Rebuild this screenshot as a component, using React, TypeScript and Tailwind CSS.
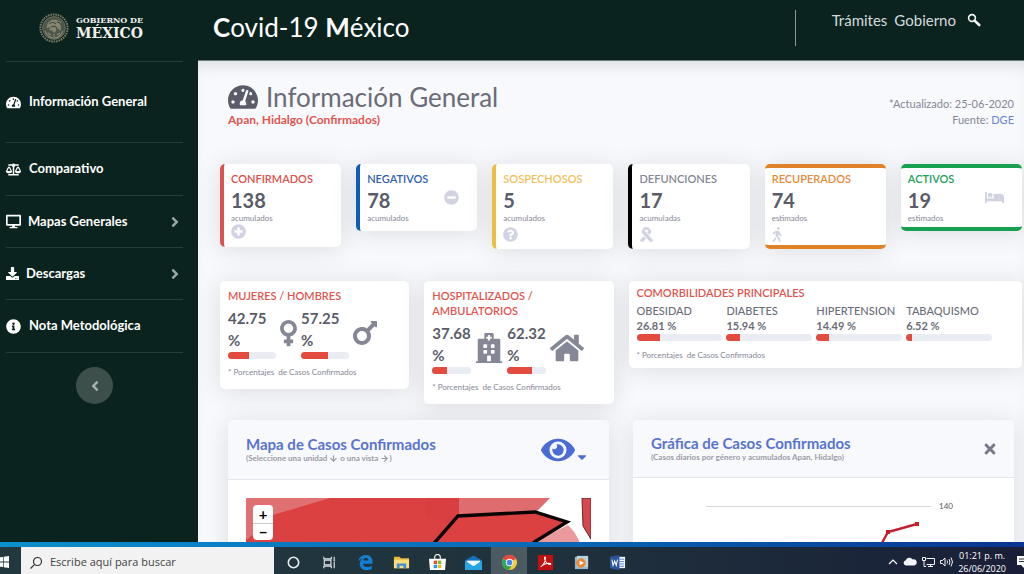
import type { ReactNode } from 'react';
import type { IconType } from 'react-icons';
import { ArrowDown, ArrowRight } from 'lucide-react';
import {
  FaAngleLeft,
  FaAngleRight,
  FaBalanceScale,
  FaBed,
  FaCaretDown,
  FaDesktop,
  FaDownload,
  FaEye,
  FaHome,
  FaHospital,
  FaInfoCircle,
  FaMars,
  FaMinusCircle,
  FaPlusCircle,
  FaQuestionCircle,
  FaRibbon,
  FaTachometerAlt,
  FaTimes,
  FaVenus,
  FaWalking,
} from 'react-icons/fa';

const cardShadow = 'shadow-[0_2px_24px_rgba(58,59,69,0.15)]';

const menu: { label: string; icon: IconType; arrow?: boolean; height: string; gap: string }[] = [
  { label: 'Información General', icon: FaTachometerAlt, height: 'h-[81px]', gap: 'gap-2' },
  { label: 'Comparativo', icon: FaBalanceScale, height: 'h-[53px]', gap: 'gap-2' },
  { label: 'Mapas Generales', icon: FaDesktop, arrow: true, height: 'h-[52px]', gap: 'gap-[7px]' },
  { label: 'Descargas', icon: FaDownload, arrow: true, height: 'h-[52px]', gap: 'gap-[7px]' },
  { label: 'Nota Metodológica', icon: FaInfoCircle, height: 'h-[53px]', gap: 'gap-2' },
];

const stats: {
  label: string;
  value: number;
  note: string;
  icon: IconType;
  side?: boolean;
  border: string;
  text: string;
  iconBox: string;
}[] = [
  { label: 'CONFIRMADOS', value: 138, note: 'acumulados', icon: FaPlusCircle, border: 'border-l-4 border-[#d9534f] pt-[7px] pb-2', text: 'text-[#e04f4a]', iconBox: 'h-4' },
  { label: 'NEGATIVOS', value: 78, note: 'acumulados', icon: FaMinusCircle, side: true, border: 'border-l-4 border-[#0f5db5] pt-[7px] pb-2', text: 'text-[#2f62b0]', iconBox: '' },
  { label: 'SOSPECHOSOS', value: 5, note: 'acumulados', icon: FaQuestionCircle, border: 'border-l-4 border-[#edbd45] pt-[7px] pb-[7px]', text: 'text-[#f0c25c]', iconBox: 'h-[19px]' },
  { label: 'DEFUNCIONES', value: 17, note: 'acumuladas', icon: FaRibbon, border: 'border-l-4 border-black pt-[7px] pb-[7px]', text: 'text-[#858796]', iconBox: 'h-[19px]' },
  { label: 'RECUPERADOS', value: 74, note: 'estimados', icon: FaWalking, border: 'border-y-4 border-[#e08228] pt-[3px] pb-[3px]', text: 'text-[#e58a3c]', iconBox: 'h-[19px]' },
  { label: 'ACTIVOS', value: 19, note: 'estimados', icon: FaBed, side: true, border: 'border-y-4 border-[#17a04f] pt-[3px] pb-1', text: 'text-[#24a058]', iconBox: '' },
];

const comorbidities = [
  { label: 'OBESIDAD', value: 26.81 },
  { label: 'DIABETES', value: 15.94 },
  { label: 'HIPERTENSION', value: 14.49 },
  { label: 'TABAQUISMO', value: 6.52 },
];

function Seal() {
  return (
    <svg viewBox="0 0 30 30" className="size-[30px]" fill="none" aria-hidden="true">
      <circle cx="15" cy="15" r="13.6" stroke="#7b7c68" strokeWidth="2" strokeDasharray="1.6 0.9" />
      <circle cx="15" cy="15" r="11.4" fill="#4c5549" stroke="#77796a" strokeWidth="0.8" />
      <path d="M8 12c1-4 5-6 9-5 3 .6 4 2 6 2-1 1-2 1-3 1 2 2 3 5 1 8-1-2-2-3-4-3 1 2 0 4-2 5-1-2-3-3-5-3 1-1 1-2 0-3-1 1-2 1-3 1 1-1 1-2 1-3z" fill="#84846f" />
      <path d="M10 11c2-2 5-2 7 0M12 14c2-1 4-1 6 1M18 9l3 1" stroke="#2c3a33" strokeWidth="0.9" />
      <path d="M6 18c2 5 6 7 9 7s7-2 9-7M9 20l3 2M15 21v3M21 20l-3 2" stroke="#8a8a74" strokeWidth="1.1" />
    </svg>
  );
}

function Card({ className = '', children }: { className?: string; children: ReactNode }) {
  return <section className={`rounded-[5px] bg-white ${cardShadow} ${className}`}>{children}</section>;
}

function Bar({ value, label }: { value: number; label: string }) {
  return (
    <div role="progressbar" aria-label={label} aria-valuenow={value} className="h-[7px] overflow-hidden rounded-full bg-[#eaecf4]">
      <div className="h-full bg-[#e34b3f]" style={{ width: `${value}%` }} />
    </div>
  );
}

function Footnote() {
  return <p className="whitespace-pre text-[8px] leading-3 text-[#858796]">* Porcentajes  de Casos Confirmados</p>;
}

function Share({ value, label, width }: { value: string; label: string; width: string }) {
  return (
    <div className={width}>
      <p className="text-[15px] leading-[22px] font-bold text-[#5a5c69]">
        {value}
        <br />%
      </p>
      <div className="pt-px">
        <Bar value={Number(value)} label={label} />
      </div>
    </div>
  );
}

function Sidebar() {
  return (
    <aside className="flex w-[198px] shrink-0 flex-col bg-[#0b231e] pr-[15px] pl-1.5 text-white">
      <a href="#inicio" className="flex h-[61px] items-center gap-[7px] pb-1.5 pl-[33px]">
        <Seal />
        <span className="flex flex-col font-['DejaVu_Serif','Liberation_Serif',serif] font-bold text-[#f1f1ee]">
          <span className="text-[8px] leading-[10px]">GOBIERNO DE</span>
          <span className="text-[14px] leading-4">MÉXICO</span>
        </span>
      </a>
      <nav className="border-b border-[#24403a]">
        {menu.map(({ label, icon: Icon, arrow, height, gap }) => (
          <a key={label} href="#menu" className={`flex items-center border-t border-[#24403a] text-[13px] font-bold ${height} ${gap}`}>
            <Icon className={label === 'Descargas' ? 'size-[13px]' : 'size-[15px]'} />
            <span className="flex-1">{label}</span>
            {arrow && <FaAngleRight className="size-4 text-[#9aa7a3]" />}
          </a>
        ))}
      </nav>
      <button type="button" aria-label="Contraer menú" className="mt-3.5 flex size-[37px] items-center justify-center self-center rounded-full bg-[#3c4f4b]">
        <FaAngleLeft className="size-4 text-[#a5afac]" />
      </button>
    </aside>
  );
}

function Header() {
  return (
    <header className="flex h-[61px] shrink-0 items-start border-b border-[#6d7b79] bg-[#0b231e] pr-[43px] pl-[15px] text-white">
      <h1 className="flex-1 pt-2.5 text-[26px] leading-[34px]">
        <b>C</b>ovid-19 <b>M</b>éxico
      </h1>
      <div className="mt-2.5 h-9 w-px bg-[#8b9794]" />
      <nav className="flex items-center gap-[7px] pt-2.5 pl-9 text-[15px] leading-5 text-[#d5dade]">
        <a href="#tramites">Trámites</a>
        <a href="#gobierno">Gobierno</a>
        <button type="button" aria-label="Buscar" className="pl-1">
          <svg viewBox="0 0 14 14" className="size-[14px]" fill="none" stroke="#f4f6f6">
            <circle cx="5" cy="5" r="3.4" strokeWidth="1.6" />
            <path d="M7.6 7.6l4.6 4.4" strokeWidth="2.6" strokeLinecap="round" />
          </svg>
        </button>
      </nav>
    </header>
  );
}

function MapPanel() {
  return (
    <Card className="overflow-hidden">
      <div className="flex h-[60px] items-center justify-between border-b border-[#e3e6f0] bg-[#f8f9fc] pr-5 pl-[18px]">
        <div className="pb-px">
          <h3 className="text-[15px] leading-[18px] font-bold text-[#5873cf]">Mapa de Casos Confirmados</h3>
          <p className="text-[8px] leading-[10px] font-bold text-[#9a9ba6]">
            (Seleccione una unidad <ArrowDown className="inline size-[9px]" strokeWidth={3} /> o una vista{' '}
            <ArrowRight className="inline size-[9px]" strokeWidth={3} />)
          </p>
        </div>
        <button type="button" aria-label="Elegir vista" className="flex items-center text-[#4a6cd4]">
          <FaEye className="size-[34px]" />
          <FaCaretDown className="mt-3.5 size-3.5" />
        </button>
      </div>
      <div className="px-[18px] pt-[18px]">
        <div className="relative">
          <svg viewBox="0 0 345 90" className="block w-full" role="img" aria-label="Mapa">
            <path d="M0 0H345V90H0z" fill="#db4141" />
            <path d="M0 0H84L27 17L8 36L0 42z" fill="#e07173" />
            <path d="M213 0H304L290 14L213 17z" fill="#df6c6f" />
            <path d="M180 0h33v17l-9 9-24-7z" fill="#d83f41" />
            <path d="M304 0H336L337 28L345 42V90H290V43L321 24L290 14z" fill="#fff" />
            <path d="M322 27Q330 35 333 43L350 90H270L290 43z" fill="#ea9a9c" />
            <path d="M336 0H345V41L337 28z" fill="#d8474b" stroke="#5d3134" />
            <path d="M160 80L190 43L212 18L289 14L321 24L290 43L240 80" fill="none" stroke="#080404" strokeWidth="3.4" />
          </svg>
          <div className="absolute top-[7px] left-[7px] flex w-5 flex-col rounded-sm bg-white text-[15px] leading-4 font-bold text-black">
            <button type="button" className="h-[19px] border-b border-[#ccc]">+</button>
            <button type="button" className="h-4">−</button>
          </div>
        </div>
      </div>
    </Card>
  );
}

function ChartPanel() {
  return (
    <Card className="overflow-hidden">
      <div className="flex h-[58px] items-center justify-between border-b border-[#e3e6f0] bg-[#f8f9fc] pr-4 pl-[18px]">
        <div className="pb-px">
          <h3 className="text-[15px] leading-[18px] font-bold text-[#5873cf]">Gráfica de Casos Confirmados</h3>
          <p className="text-[8px] leading-[10px] font-bold text-[#9a9ba6]">(Casos diarios por género y acumulados Apan, Hidalgo)</p>
        </div>
        <button type="button" aria-label="Cerrar" className="text-[#77798a]">
          <FaTimes className="size-4" />
        </button>
      </div>
      <svg viewBox="0 0 381 90" className="block w-full" role="img" aria-label="Casos acumulados">
        <path d="M73 28.5H298" stroke="#d5d5da" />
        <text x="306" y="31" fontSize="8" fill="#555">140</text>
        <path d="M244 74L255 54L284 46" fill="none" stroke="#c2202a" strokeWidth="2.4" />
        <path d="M253 52h4v4h-4zM282 44h4v4h-4z" fill="#c2202a" />
      </svg>
    </Card>
  );
}

function Dashboard() {
  return (
    <main className="flex-1 bg-[#f8f9fc] pr-0.5 pl-[22px] shadow-[inset_0_12px_16px_-8px_rgba(58,59,69,0.15)]">
      <div className="flex items-start justify-between pt-5 pr-2 pl-2">
        <div>
          <h2 className="flex items-center gap-2 text-[26px] leading-8 text-[#6a6c78]">
            <FaTachometerAlt className="size-[30px] text-[#5a5c69]" />
            Información General
          </h2>
          <p className="pt-px text-[12px] leading-3 font-bold text-[#e0564f]">Apan, Hidalgo (Confirmados)</p>
        </div>
        <p className="pt-[15px] text-right text-[11px] leading-4 text-[#858796]">
          *Actualizado: 25-06-2020
          <br />
          Fuente: <a href="#dge" className="text-[#6b86cf]">DGE</a>
        </p>
      </div>

      <div className="mt-9 grid h-[86px] grid-cols-6 items-start gap-[15px]">
        {stats.map(({ label, value, note, icon: Icon, side, border, text, iconBox }) => (
          <Card key={label} className={border}>
            <div className="flex items-center justify-between pr-[18px] pl-[7px]">
              <div>
                <h3 className={`text-[11px] leading-4 font-semibold ${text}`}>{label}</h3>
                <p className="text-[20px] leading-[27px] font-bold text-[#5a5c69]">{value}</p>
                <p className="text-[8px] leading-[9px] text-[#858796]">{note}</p>
                {!side && (
                  <div className={`flex items-end ${iconBox}`}>
                    <Icon className={`text-[#d1d3e2] ${label === 'RECUPERADOS' ? 'h-[15px] w-2.5' : 'size-[15px]'}`} />
                  </div>
                )}
              </div>
              {side && <Icon className={`text-[#d1d3e2] ${label === 'ACTIVOS' ? 'size-[19px]' : 'size-[15px]'}`} />}
            </div>
          </Card>
        ))}
      </div>

      <div className="mt-[31px] grid grid-cols-4 items-start gap-[15px]">
        <Card className="px-2 pt-[7px] pb-[11px]">
          <h3 className="text-[11px] leading-[15px] font-semibold text-[#e0564f]">MUJERES / HOMBRES</h3>
          <div className="flex items-center gap-1 pt-1 pb-[7px] text-[#858796]">
            <Share value="42.75" label="Mujeres" width="w-12" />
            <FaVenus className="h-[30px] w-[17px] shrink-0" />
            <Share value="57.25" label="Hombres" width="w-12" />
            <FaMars className="h-8 w-6 shrink-0" />
          </div>
          <Footnote />
        </Card>
        <Card className="px-2 pt-[7px] pb-[11px]">
          <h3 className="text-[11px] leading-[15px] font-semibold text-[#e0564f]">
            HOSPITALIZADOS /
            <br />
            AMBULATORIOS
          </h3>
          <div className="flex items-center gap-1 pt-1 pb-[7px] text-[#858796]">
            <Share value="37.68" label="Hospitalizados" width="w-[39px]" />
            <FaHospital className="h-[30px] w-[28px] shrink-0" />
            <Share value="62.32" label="Ambulatorios" width="w-[39px]" />
            <FaHome className="size-[34px] shrink-0" />
          </div>
          <Footnote />
        </Card>
        <Card className="col-span-2 px-2 pt-1 pb-[7px]">
          <h3 className="text-[11px] leading-[15px] font-semibold text-[#e0564f]">COMORBILIDADES PRINCIPALES</h3>
          <div className="grid grid-cols-4 gap-1 pt-[3px] pr-[22px] pb-2">
            {comorbidities.map(({ label, value }) => (
              <div key={label} className="text-[11px] font-bold text-[#6b6d79]">
                <p className="leading-[15px] font-medium">{label}</p>
                <p className="leading-4">{value} %</p>
                <Bar value={value} label={label} />
              </div>
            ))}
          </div>
          <Footnote />
        </Card>
      </div>

      <div className="mt-4 grid grid-cols-2 items-start gap-6 px-2">
        <MapPanel />
        <ChartPanel />
      </div>
    </main>
  );
}

const apps: { name: string; art: ReactNode }[] = [
  { name: 'Cortana', art: <circle cx="9" cy="9" r="5.5" fill="none" stroke="#e8ecee" strokeWidth="1.7" /> },
  {
    name: 'Vista de tareas',
    art: <path d="M3 3v2h8V3M3 15v-2h8v2M3.500 6.500h7v5h-7zM14 3v2.500M14 8v7M13 6.500h2" fill="none" stroke="#dfe5e7" strokeWidth="1.2" />,
  },
  {
    name: 'Edge',
    art: <path d="M1.500 8C2 3.500 5.500 1 9.300 1c4.500 0 7.200 3 7.200 7.300v1.900H6.300c.2 2.500 2.200 3.600 4.600 3.600 1.800 0 3.400-.5 4.700-1.300v3.400c-1.500.8-3.300 1.200-5.200 1.200-4.600 0-7.500-2.600-7.500-6.800 0-2.500 1.200-4.600 3.300-5.900C4 5 2.500 6.200 1.500 8zm5-1h5.500c0-1.800-.9-2.900-2.600-2.900S6.700 5.300 6.500 7z" fill="#1380d8" />,
  },
  {
    name: 'Explorador',
    art: (
      <>
        <path d="M1 3h6l1.500 1.500H17V15H1z" fill="#e9b63c" />
        <path d="M1 6h16v9H1z" fill="#fbdc7c" />
        <path d="M4 15v-5h10v5h-3v-2.500H7V15z" fill="#3f8fd2" />
      </>
    ),
  },
  {
    name: 'Microsoft Store',
    art: (
      <>
        <path d="M6 5V3.500a3 3 0 016 0V5" fill="none" stroke="#fff" strokeWidth="1.2" />
        <path d="M0 5h18l-1 12H1z" fill="#fff" />
        <path d="M5 7h3.600v3.600H5z" fill="#e8502a" />
        <path d="M9.400 7H13v3.600H9.400z" fill="#7fba2a" />
        <path d="M5 11.400h3.600V15H5z" fill="#1b9de2" />
        <path d="M9.400 11.400H13V15H9.400z" fill="#f7b91a" />
      </>
    ),
  },
  {
    name: 'Correo',
    art: (
      <>
        <path d="M0 7l9-5.500L18 7v10H0z" fill="#1272bd" />
        <path d="M2 7h14v6H2z" fill="#f4fafd" />
        <path d="M0 7l9 6 9-6v10H0z" fill="#29a5e6" />
      </>
    ),
  },
  {
    name: 'Chrome',
    art: (
      <>
        <circle cx="9" cy="9" r="8" fill="#f8ca3a" />
        <path d="M9 9L2 5a8 8 0 0114 0z" fill="#e14a3d" />
        <path d="M2 5a8 8 0 006.500 12L12 11 9 9z" fill="#35a455" />
        <circle cx="9" cy="9" r="3.900" fill="#fff" />
        <circle cx="9" cy="9" r="3" fill="#4385f0" />
      </>
    ),
  },
  {
    name: 'Acrobat',
    art: (
      <>
        <path d="M1 1h16v16H1z" fill="#c1100f" />
        <path d="M4 13.500c2-1 5-5 5-9.500 0-1.500-1.500-1-1 1 .6 3 3 6 6 6 1.500-.4 0-1.500-2.500-1.200C9 10 6 11.500 4 13.500z" fill="none" stroke="#fff" strokeWidth="1.100" />
      </>
    ),
  },
  {
    name: 'Reproductor',
    art: (
      <>
        <path d="M2 3h14v13H2z" fill="#8fb6cf" />
        <path d="M4 2h12v12H4z" fill="#b9d2df" />
        <circle cx="8.500" cy="9.500" r="5" fill="#ed8733" />
        <path d="M7 7l4.500 2.500L7 12z" fill="#fff" />
      </>
    ),
  },
  {
    name: 'Word',
    art: (
      <>
        <path d="M9 3h8v12H9z" fill="#f2f5fa" />
        <path d="M11 5.500h5M11 8h5M11 10.500h5M11 13h5" stroke="#5d86c4" />
        <path d="M1 3l10-2v16L1 15z" fill="#2a5699" />
        <path d="M3 6l1.300 6L6 7.500 7.700 12 9 6" fill="none" stroke="#fff" strokeWidth="1.100" />
      </>
    ),
  },
];

function Taskbar() {
  return (
    <footer className="shrink-0 bg-linear-to-r from-[#0c8fca] via-[#0a6bb8] to-[#0a3390] pt-[5px] font-['Open_Sans','Noto_Sans',sans-serif]">
      <div className="flex h-[27px] items-stretch overflow-hidden bg-linear-to-r from-[#21383f] via-[#20333d] to-[#191f38]">
        <button type="button" aria-label="Inicio" className="flex w-[21px] items-center pt-0.5">
          <svg viewBox="0 0 9 12" className="h-3 w-[9px]" fill="#fff">
            <path d="M0 1.300L3 1v4.600H0zM3.700.8L9 0v5.600H3.700zM0 6.400h3V11l-3-.3zM3.700 6.400H9V12l-5.300-.8z" />
          </svg>
        </button>
        <label className="flex w-[253px] items-center gap-[7px] bg-[#f2f2f2] pt-1 pl-2">
          <svg viewBox="0 0 14 14" className="size-[14px]" fill="none" stroke="#333" strokeWidth="1.200">
            <circle cx="8.500" cy="5.500" r="4" />
            <path d="M5.700 8.300L1.500 12.500" />
          </svg>
          <input aria-label="Buscar" placeholder="Escribe aquí para buscar" className="min-w-0 flex-1 text-[11px] outline-none placeholder:text-[#444]" />
        </label>
        <div className="flex pl-px">
          {apps.map(({ name, art }) => (
            <button key={name} type="button" aria-label={name} className={`flex w-9 items-center justify-center pt-[3px] ${name === 'Chrome' ? 'bg-[#4c5b62]' : ''}`}>
              <svg viewBox="0 0 18 18" className="size-[17px]">{art}</svg>
            </button>
          ))}
        </div>
        <div className="ml-auto flex items-center gap-[5px] pt-0.5 text-white">
          <svg viewBox="0 0 10 8" className="h-2 w-2.5" fill="none" stroke="#fff" strokeWidth="1.200">
            <path d="M1 6l4-4 4 4" />
          </svg>
          <svg viewBox="0 0 14 9" className="h-[9px] w-3.5" fill="#f2f4f6">
            <path d="M3 8.500a2.700 2.700 0 01-.3-5.300A4 4 0 019.700 2.500a3 3 0 011.800 6z" />
          </svg>
          <svg viewBox="0 0 13 12" className="h-3 w-[13px]" fill="none" stroke="#f2f4f6">
            <path d="M4.500 2.500h8v6h-8M8.500 8.500v2M6 10.500h5M.5 1.500h3v3h-3zM2 4.500v6h2" />
          </svg>
          <svg viewBox="0 0 13 12" className="h-3 w-[13px]" fill="none" stroke="#f2f4f6">
            <path d="M.5 4.500h2L5 2v8L2.500 7.500h-2zM7 4.500q1 1.500 0 3M9 3q2 3 0 6M11 1.500q3 4.500 0 9" />
          </svg>
          <p className="text-center text-[9px] leading-[13px]">
            01:21 p. m.
            <br />
            26/06/2020
          </p>
          <svg viewBox="0 0 7 12" className="ml-1.5 h-3 w-[7px]">
            <path d="M0 0h7v12L4 9H0z" fill="#fff" />
            <path d="M2 3h5M2 5.500h5" stroke="#2a3048" />
          </svg>
        </div>
      </div>
    </footer>
  );
}

export default function App() {
  return (
    <div className="flex h-screen flex-col overflow-hidden font-['Lato','Open_Sans',sans-serif]">
      <div className="flex min-h-0 flex-1 overflow-hidden">
        <Sidebar />
        <div className="flex min-w-0 flex-1 flex-col">
          <Header />
          <Dashboard />
        </div>
      </div>
      <Taskbar />
    </div>
  );
}
